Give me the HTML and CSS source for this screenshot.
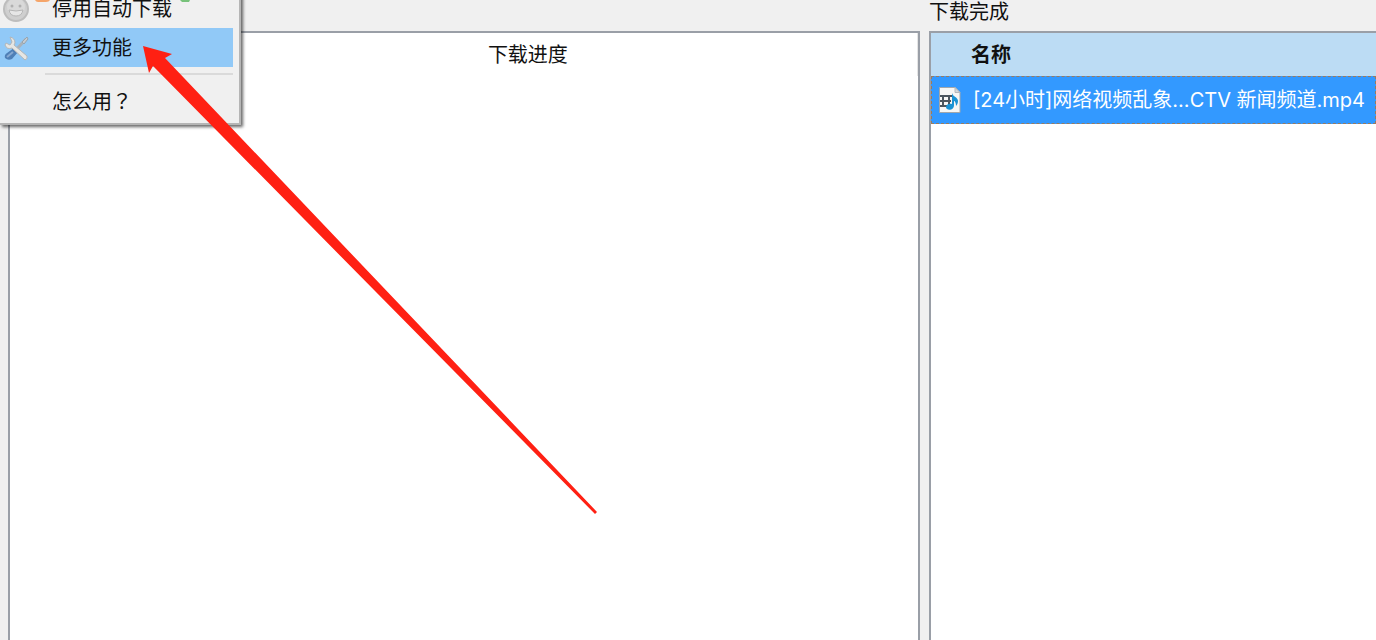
FILE: index.html
```html
<!DOCTYPE html>
<html lang="zh-CN">
<head>
    <meta charset="UTF-8">
    <meta name="viewport" content="width=device-width, initial-scale=1.0">
    <title>下载</title>
    <link rel="stylesheet" href="styles.css">
</head>
<body>
    <main class="panes">
        <!-- Running downloads -->
        <section class="pane pane-progress">
            <div class="pane-title"></div>
            <div class="list">
                <table class="progress-table">
                    <thead>
                        <tr>
                            <th class="col-file"></th>
                            <th>下载进度</th>
                        </tr>
                    </thead>
                </table>
            </div>
        </section>

        <!-- Finished downloads -->
        <section class="pane pane-done">
            <h2 class="pane-title">下载完成</h2>
            <div class="list">
                <table class="done-table">
                    <thead>
                        <tr><th>名称</th></tr>
                    </thead>
                    <tbody>
                        <tr>
                            <td>
                                <div class="file">
                                    <svg class="file-icon" width="24" height="28" viewBox="0 0 24 28">
                                        <path d="M1.500 1.500h15.500l5 5v20h-20.500z" fill="#f7f7f5" stroke="#a2a7ab"/>
                                        <path d="M17 1.500v5h5z" fill="#d5d8da" stroke="#b4b8bb"/>
                                        <path d="M2 9h12v2H2zM2 14h11v2H2zM2 19h10v2H2zM4 9h2v12H4zM10 9h2v11h-2z" fill="#4c565e"/>
                                        <path d="M14 7c1 4 6 4 6 8 0 2-1 4-2 5 0-3-1-5-2-5v4c0 6-8 6-8 2 0-3 4-4 6-3V7z" fill="#1b93d4"/>
                                    </svg>
                                    <span>[24小时]网络视频乱象...CTV 新闻频道.mp4</span>
                                </div>
                            </td>
                        </tr>
                    </tbody>
                </table>
            </div>
        </section>
    </main>

    <!-- Drop-down menu, its top is scrolled out of the window -->
    <nav class="menu">
        <svg class="menu-scrap" width="200" height="3" viewBox="0 0 200 3">
            <path d="M35 0h15q-1 2-4 2h-8q-2 0-3-2z" fill="#f5a56a"/>
            <path d="M180 0h10l-1 2h-7z" fill="#77c27a"/>
        </svg>
        <button type="button" class="menu-item">
            <svg class="menu-icon" width="28" height="28" viewBox="0 0 28 28">
                <circle cx="14" cy="14" r="12" fill="#cfcfcf" stroke="#bdbdbd" stroke-width="2"/>
                <circle cx="14" cy="12" r="9" fill="#d9d9d9"/>
                <circle cx="10" cy="11" r="1.500" fill="#b0b0b0"/>
                <circle cx="18" cy="11" r="1.500" fill="#b0b0b0"/>
                <path d="M7 15q7 2 14 0-1 6-7 6t-7-6z" fill="#e6e6e6" stroke="#b5b5b5"/>
            </svg>
            停用自动下载
        </button>
        <button type="button" class="menu-item active">
            <svg class="menu-icon" width="28" height="28" viewBox="0 0 28 28">
                <path d="M24 5L13 17" stroke="#a9b2ba" stroke-width="3"/>
                <path d="M25 3l1 2-4 5-2-2z" fill="#c5cbd0" stroke="#97a3ad"/>
                <path d="M12 14l4 4-6 7q-4 2-7-1-1-3 2-5z" fill="#4f7fb6"/>
                <path d="M11 18l-6 5" stroke="#86a9d2" stroke-width="2"/>
                <path d="M8 3q5 1 5 6l-1 2 13 11q1 3-2 4L10 14q-5 2-7-3l1-2 4 2 2-3z" fill="#e6e6e3" stroke="#b3b6b8"/>
            </svg>
            更多功能
        </button>
        <hr>
        <button type="button" class="menu-item">
            <span class="menu-icon"></span>
            <span lang="zh-TW" class="help">怎么用？</span>
        </button>
    </nav>

    <!-- Hint arrow pointing at the menu item -->
    <svg class="arrow" width="600" height="520" viewBox="0 0 600 520">
        <path d="M143 46L172 54 165 58 597 512 595 514 153 66 149 73z" fill="#ff2013"/>
    </svg>
</body>
</html>
```
FILE: styles.css
```css
* {
    box-sizing: border-box;
}

body {
    margin: 0;
    height: 100vh;
    overflow: hidden;
    background: #f0f0f0;
    color: #111;
    font-family: "Open Sans", "Noto Sans CJK SC", sans-serif;
    font-size: 20px;
    line-height: 24px;
}

/* Panes */
.panes {
    display: flex;
    gap: 9px;
    height: 100%;
    padding-left: 8px;
}

.pane {
    display: flex;
    flex-direction: column;
    min-width: 0;
}

.pane-progress {
    flex: 51;
}

.pane-done {
    flex: 25;
}

.pane-title {
    height: 31px;
    margin: 0;
    font-size: 20px;
    font-weight: normal;
}

.list {
    flex: 1;
    border: 2px solid #9a9fa7;
    border-bottom: 0;
    background: #fff;
}

.pane-done .list {
    border-right: 0;
}

table {
    width: 100%;
    border-collapse: collapse;
    table-layout: fixed;
}

th {
    height: 43px;
    padding: 0 6px;
    text-align: left;
    font-weight: normal;
}

.progress-table th:last-child {
    border-right: 1px solid #e5e5e5;
}

.col-file {
    width: 52%;
}

.done-table th {
    padding-left: 40px;
    background: #bcdcf4;
    font-weight: bold;
}

.done-table td {
    padding: 0;
}

.file {
    display: flex;
    align-items: center;
    gap: 11px;
    height: 48px;
    padding-left: 6px;
    border: 1px dashed #997b60;
    background: #3399ff;
    color: #fff;
    font-family: "Inter", "Noto Sans CJK SC", sans-serif;
    white-space: nowrap;
}

.file-icon {
    flex: none;
}

/* Menu */
.menu {
    position: absolute;
    top: -11px;
    left: 0;
    width: 241px;
    padding: 0 6px 3px 0;
    border: 1px solid #b5b5b5;
    border-width: 0 2px 2px 0;
    background: #f0f0f0;
    box-shadow: 2px 2px 3px rgba(0, 0, 0, 0.6);
}

.menu-scrap {
    position: absolute;
    top: 11px;
    left: 0;
}

.menu-item {
    display: flex;
    align-items: center;
    gap: 22px;
    width: 100%;
    height: 39px;
    padding: 0 0 0 2px;
    border: 0;
    background: none;
    color: inherit;
    font: inherit;
    text-align: left;
}

.menu-icon {
    flex: none;
    width: 28px;
}

.menu-item.active {
    background: #91c9f7;
}

.help {
    font-family: "Noto Sans CJK TC", sans-serif;
}

.menu hr {
    height: 2px;
    margin: 6px 0 6px 45px;
    border: 0;
    background: #dadada;
}

/* Arrow */
.arrow {
    position: absolute;
    top: 0;
    left: 0;
    pointer-events: none;
}
```
